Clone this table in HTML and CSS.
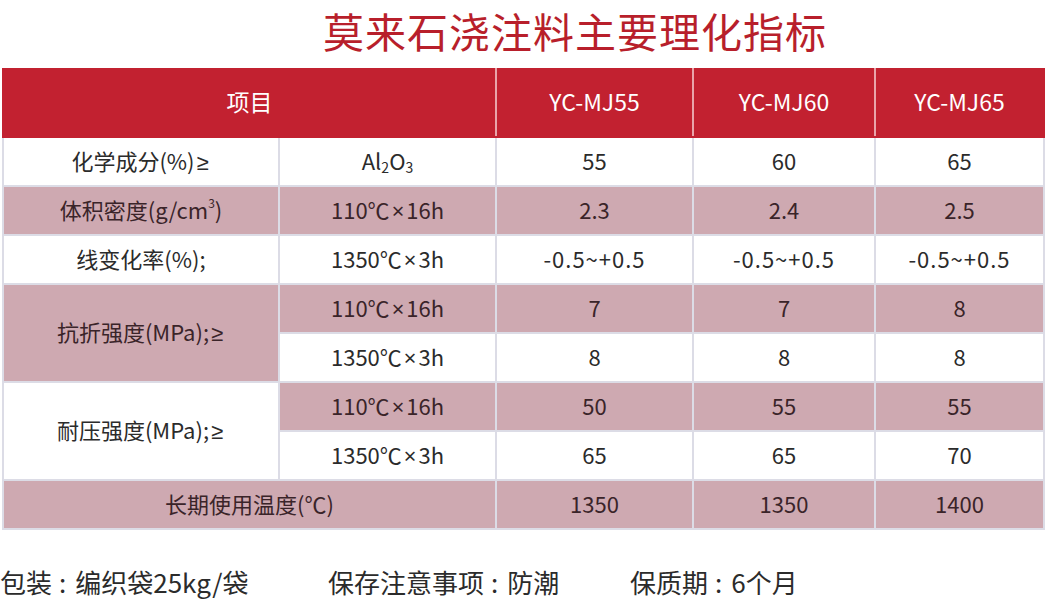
FILE: index.html
```html
<!DOCTYPE html>
<html lang="zh">
<head>
<meta charset="utf-8">
<link rel="stylesheet" href="styles.css">
</head>
<body>
<h1 class="title">莫来石浇注料主要理化指标</h1>
<table class="spec">
  <colgroup>
    <col class="c1"><col class="c2"><col class="c3"><col class="c4"><col class="c5">
  </colgroup>
  <thead>
    <tr><th colspan="2">项目</th><th>YC-MJ55</th><th>YC-MJ60</th><th>YC-MJ65</th></tr>
  </thead>
  <tbody>
    <tr><td>化学成分(%)<span class="m">≥</span></td><td>Al<sub>2</sub>O<sub>3</sub></td><td>55</td><td>60</td><td>65</td></tr>
    <tr class="pk"><td>体积密度(g/cm<sup>3</sup>)</td><td>110℃<span class="m">×</span>16h</td><td>2.3</td><td>2.4</td><td>2.5</td></tr>
    <tr><td>线变化率(%);</td><td>1350℃<span class="m">×</span>3h</td><td class="rng">-0.5~+0.5</td><td class="rng">-0.5~+0.5</td><td class="rng">-0.5~+0.5</td></tr>
    <tr class="pk"><td rowspan="2" class="pkc">抗折强度(MPa);<span class="m">≥</span></td><td>110℃<span class="m">×</span>16h</td><td>7</td><td>7</td><td>8</td></tr>
    <tr><td>1350℃<span class="m">×</span>3h</td><td>8</td><td>8</td><td>8</td></tr>
    <tr class="pk"><td rowspan="2" class="wc">耐压强度(MPa);<span class="m">≥</span></td><td>110℃<span class="m">×</span>16h</td><td>50</td><td>55</td><td>55</td></tr>
    <tr><td>1350℃<span class="m">×</span>3h</td><td>65</td><td>65</td><td>70</td></tr>
    <tr class="pk"><td colspan="2">长期使用温度(℃)</td><td>1350</td><td>1350</td><td>1400</td></tr>
  </tbody>
</table>
<div class="notes">
  <span class="n1">包装<span class="col">:</span>编织袋25kg/袋</span>
  <span class="n2">保存注意事项<span class="col">:</span>防潮</span>
  <span class="n3">保质期<span class="col">:</span>6个月</span>
</div>
</body>
</html>
```

FILE: styles.css
```css
html, body {
  margin: 0;
  padding: 0;
  background: #ffffff;
  font-family: "Noto Sans CJK SC", "Noto Sans", sans-serif;
}
.title {
  margin: 0;
  padding: 0 0 0 104px;
  height: 67px;
  box-sizing: border-box;
  text-align: center;
  font-size: 41px;
  line-height: 60px;
  font-weight: 400;
  color: #b81f2b;
  letter-spacing: 1px;
}
.spec {
  margin-left: 2px;
  margin-top: 1px;
  width: 1041px;
  border-collapse: collapse;
  table-layout: fixed;
  font-size: 22px;
  color: #2b2b2b;
}
.c1 { width: 276px; }
.c2 { width: 217px; }
.c3 { width: 197px; }
.c4 { width: 182px; }
.c5 { width: 169px; }
.spec th {
  background: #c22130;
  color: #ffffff;
  font-weight: 400;
  font-size: 23px;
  height: 62px;
  padding: 0 0 4px 0;
  border: 2px solid #c22130;
  border-left-color: #e9a4aa;
  border-right-color: #e9a4aa;
  text-align: center;
}
.spec th:first-child { border-left-color: #c22130; }
.spec th:last-child { border-right-color: #c22130; }
.spec td {
  height: 44px;
  padding: 0 0 3px 0;
  text-align: center;
  border: 2px solid #dcdce6;
  background: #ffffff;
  line-height: 26px;
}
.spec td.rng { letter-spacing: 1px; }
.spec .m { font-family: "Noto Sans", sans-serif; margin: 0 2px; }
.spec tr.pk td { background: #cea9b1; color: #3a2429; }
.spec td.pkc { background: #cea9b1; color: #3a2429; }
.spec tr.pk td.wc { background: #ffffff; color: #2b2b2b; }
.spec sub { font-size: 14px; vertical-align: -3px; line-height: 0; }
.spec sup { font-size: 12px; vertical-align: 11px; line-height: 0; }
.notes {
  display: flex;
  margin-top: 35px;
  font-size: 26px;
  line-height: 34px;
  color: #2b2b2b;
}
.col { margin: 0 9px 0 7px; }
.n1 { width: 328px; flex: none; }
.n2 { width: 302px; flex: none; }
```
